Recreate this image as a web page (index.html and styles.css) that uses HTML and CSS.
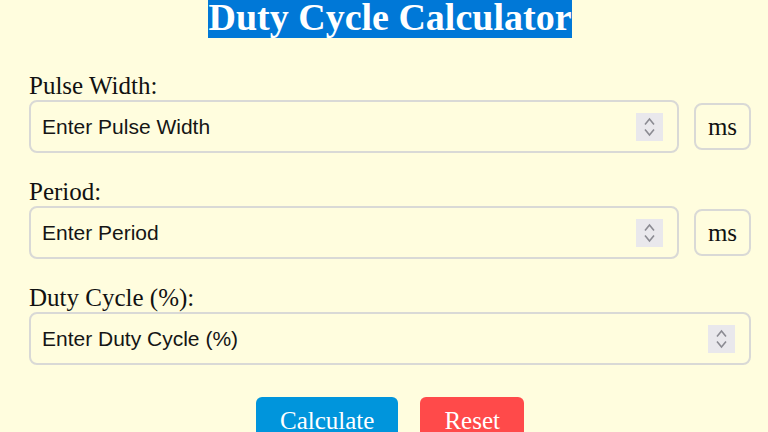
FILE: index.html
```html
<!DOCTYPE html>
<html lang="en">
<head>
    <meta charset="UTF-8">
    <meta name="viewport" content="width=device-width, initial-scale=1.0">
    <title>Duty Cycle Calculator</title>
    <link rel="stylesheet" href="styles.css">
</head>
<body>
    <div class="container">
        <h1><span class="title-mark">Duty Cycle Calculator</span></h1>

        <div class="form-group">
            <label for="pulseWidth">Pulse Width:</label>
            <div class="field-row">
                <div class="num-box">
                    <input type="number" id="pulseWidth" placeholder="Enter Pulse Width">
                    <span class="spinner">
                        <svg width="11" height="20" viewBox="0 0 11 20"><path d="M1 7.5 L5.5 2 L10 7.5 M1 12.5 L5.5 18 L10 12.5" fill="none" stroke="#8b8b92" stroke-width="1.6"/></svg>
                    </span>
                </div>
                <div class="unit">ms</div>
            </div>
        </div>

        <div class="form-group">
            <label for="period">Period:</label>
            <div class="field-row">
                <div class="num-box">
                    <input type="number" id="period" placeholder="Enter Period">
                    <span class="spinner">
                        <svg width="11" height="20" viewBox="0 0 11 20"><path d="M1 7.5 L5.5 2 L10 7.5 M1 12.5 L5.5 18 L10 12.5" fill="none" stroke="#8b8b92" stroke-width="1.6"/></svg>
                    </span>
                </div>
                <div class="unit">ms</div>
            </div>
        </div>

        <div class="form-group">
            <label for="dutyCycle">Duty Cycle (%):</label>
            <div class="field-row">
                <div class="num-box">
                    <input type="number" id="dutyCycle" placeholder="Enter Duty Cycle (%)">
                    <span class="spinner">
                        <svg width="11" height="20" viewBox="0 0 11 20"><path d="M1 7.5 L5.5 2 L10 7.5 M1 12.5 L5.5 18 L10 12.5" fill="none" stroke="#8b8b92" stroke-width="1.6"/></svg>
                    </span>
                </div>
            </div>
        </div>

        <div class="buttons">
            <button class="btn-calc">Calculate</button>
            <button class="btn-reset">Reset</button>
        </div>
    </div>
</body>
</html>
```

FILE: styles.css
```css
* {
    box-sizing: border-box;
}

body {
    margin: 0;
    background-color: #fffdde;
    color: #111;
    font-family: "Liberation Serif", "Times New Roman", serif;
    overflow: hidden;
}

.container {
    padding: 0 17px 0 29px;
}

h1 {
    margin: 0 0 38px;
    text-align: center;
    font-size: 38px;
    line-height: 34px;
    font-weight: bold;
}

.title-mark {
    background-color: #0078d7;
    color: #fff;
}

.form-group {
    margin-bottom: 25px;
}

label {
    display: block;
    font-size: 25px;
    line-height: 28px;
}

.field-row {
    display: flex;
    align-items: center;
    gap: 15px;
}

.num-box {
    flex: 1;
    height: 53px;
    display: flex;
    align-items: center;
    padding: 0 14px 0 11px;
    border: 2px solid #d9d9d6;
    border-radius: 8px;
}

.num-box input {
    flex: 1;
    min-width: 0;
    border: none;
    outline: none;
    background: transparent;
    padding: 0;
    font-family: "Liberation Sans", Arial, sans-serif;
    font-size: 21px;
    color: #111;
    -moz-appearance: textfield;
}

.num-box input::placeholder {
    color: #151515;
}

.num-box input::-webkit-inner-spin-button,
.num-box input::-webkit-outer-spin-button {
    -webkit-appearance: none;
    margin: 0;
}

.spinner {
    width: 27px;
    height: 28px;
    display: flex;
    align-items: center;
    justify-content: center;
    background-color: #e9e8ec;
}

.unit {
    width: 57px;
    height: 47px;
    display: flex;
    align-items: center;
    justify-content: center;
    font-size: 25px;
    border: 2px solid #d9d9d6;
    border-radius: 8px;
}

.buttons {
    display: flex;
    justify-content: center;
    gap: 22px;
    margin-top: 32px;
}

.buttons button {
    padding: 10px 24px;
    border: none;
    border-radius: 6px;
    color: #fff;
    font-family: "Liberation Serif", "Times New Roman", serif;
    font-size: 25px;
    cursor: pointer;
}

.btn-calc {
    background-color: #0095dc;
}

.btn-reset {
    background-color: #ff4a4a;
}
```
